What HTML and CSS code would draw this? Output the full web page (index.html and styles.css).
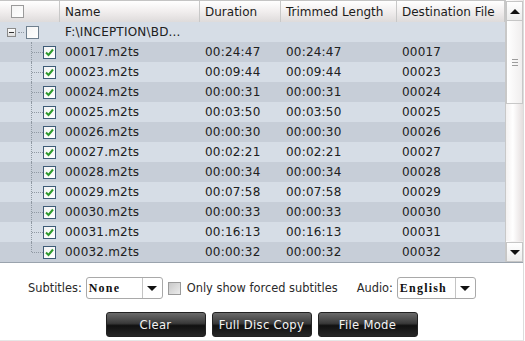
FILE: index.html
```html
<!DOCTYPE html>
<html lang="en">
<head>
  <meta charset="UTF-8">
  <title>Title List</title>
  <link rel="stylesheet" href="styles.css">
</head>
<body>
  <div class="app">
    <div class="grid">
      <div class="table">
        <div class="head">
          <div class="cell c-check"><span class="box head-box"></span></div>
          <div class="cell c-name">Name</div>
          <div class="cell c-dur">Duration</div>
          <div class="cell c-trim">Trimmed Length</div>
          <div class="cell c-dest">Destination File</div>
        </div>

        <div class="row light parent">
          <div class="cell c-check">
            <span class="minus"></span>
            <span class="dots-h short"></span>
            <span class="box"></span>
          </div>
          <div class="cell c-name">F:\INCEPTION\BD...</div>
          <div class="cell c-dur"></div>
          <div class="cell c-trim"></div>
          <div class="cell c-dest"></div>
        </div>

        <div id="rows"></div>
      </div>

      <div class="scrollbar">
        <div class="sb-btn"><span class="tri up"></span></div>
        <div class="sb-thumb"><span class="grip"></span></div>
        <div class="sb-track"></div>
        <div class="sb-btn"><span class="tri down"></span></div>
      </div>
    </div>

    <div class="options">
      <span class="label">Subtitles:</span>
      <div class="select sel-sub"><span class="sel-text">None</span><span class="sel-arrow"><span class="tri down"></span></span></div>
      <span class="box grey"></span>
      <span class="label forced">Only show forced subtitles</span>
      <span class="label audio">Audio:</span>
      <div class="select sel-audio"><span class="sel-text">English</span><span class="sel-arrow"><span class="tri down"></span></span></div>
    </div>

    <div class="buttons">
      <button>Clear</button>
      <button>Full Disc Copy</button>
      <button>File Mode</button>
    </div>
  </div>

  <script>
    // file list: name, duration, trimmed length, destination
    const files = [
      ["00017.m2ts", "00:24:47", "00:24:47", "00017"],
      ["00023.m2ts", "00:09:44", "00:09:44", "00023"],
      ["00024.m2ts", "00:00:31", "00:00:31", "00024"],
      ["00025.m2ts", "00:03:50", "00:03:50", "00025"],
      ["00026.m2ts", "00:00:30", "00:00:30", "00026"],
      ["00027.m2ts", "00:02:21", "00:02:21", "00027"],
      ["00028.m2ts", "00:00:34", "00:00:34", "00028"],
      ["00029.m2ts", "00:07:58", "00:07:58", "00029"],
      ["00030.m2ts", "00:00:33", "00:00:33", "00030"],
      ["00031.m2ts", "00:16:13", "00:16:13", "00031"],
      ["00032.m2ts", "00:00:32", "00:00:32", "00032"]
    ];

    const check = '<svg width="9" height="9" viewBox="0 0 9 9"><path d="M1 4.5 L3.5 7 L8 1.5" fill="none" stroke="#2e9a2e" stroke-width="2"/></svg>';
    const rows = document.getElementById("rows");

    files.forEach((f, i) => {
      const row = document.createElement("div");
      row.className = "row child " + (i % 2 === 0 ? "dark" : "light");
      row.innerHTML = `
        <div class="cell c-check">
          <span class="tree-v"></span>
          <span class="dots-h"></span>
          <span class="box checked">${check}</span>
        </div>
        <div class="cell c-name">${f[0]}</div>
        <div class="cell c-dur">${f[1]}</div>
        <div class="cell c-trim">${f[2]}</div>
        <div class="cell c-dest">${f[3]}</div>`;
      rows.appendChild(row);
    });
  </script>
</body>
</html>
```

FILE: styles.css
```css
body {
  margin: 0;
  font-family: "DejaVu Sans", Verdana, sans-serif;
  font-size: 12px;
  color: #1c1c1c;
  background-color: #ffffff;
}

.app {
  width: 523px;
  height: 340px;
  border-right: 1px solid #dcdcdc;
  border-bottom: 1px solid #e6e6e6;
  background-color: #ffffff;
}

.grid {
  display: flex;
  height: 262px;
  border-bottom: 1px solid #9aa3ad;
}

.table {
  width: 505px;
  overflow: hidden;
}

.head,
.row {
  display: flex;
}

.head {
  height: 21px;
  border-top: 1px solid #c4c4c4;
  background: linear-gradient(#ffffff, #f1eeee 50%, #dedbdb);
}

.head .cell {
  border-right: 1px solid #c8c8c8;
  line-height: 22px;
}

.row {
  height: 20px;
  line-height: 21px;
}

.row.light {
  background-color: #d6dde6;
}

.row.dark {
  background-color: #c7ced8;
}

.cell {
  padding-left: 5px;
  box-sizing: border-box;
  white-space: nowrap;
  overflow: hidden;
}

.row .cell {
  letter-spacing: 0.2px;
  color: #202020;
}

.c-check {
  width: 60px;
  display: flex;
  align-items: center;
  position: relative;
  padding-left: 0;
}

.c-name {
  width: 140px;
}

.c-dur {
  width: 81px;
}

.c-trim {
  width: 116px;
}

.c-dest {
  width: 108px;
}

/* checkboxes */
.box {
  display: inline-flex;
  align-items: center;
  justify-content: center;
  width: 11px;
  height: 11px;
  border: 1px solid #6f7f8e;
  background: linear-gradient(135deg, #f4f4f4, #ffffff);
  flex-shrink: 0;
}

.head-box {
  margin-left: 11px;
  border-color: #9a9a9a;
}

.box.grey {
  border-color: #9a9a9a;
  background: linear-gradient(135deg, #c8c8c8, #ececec);
}

.box.checked {
  border-color: #3c5a76;
  background-color: #ffffff;
}

/* tree lines */
.minus {
  width: 7px;
  height: 7px;
  margin-left: 7px;
  border: 1px solid #8a8a8a;
  background: linear-gradient(#ffffff, #dcdcdc);
  position: relative;
}

.minus::after {
  content: "";
  position: absolute;
  left: 1px;
  top: 3px;
  width: 5px;
  height: 1px;
  background-color: #333333;
}

.dots-h {
  width: 11px;
  height: 0;
  margin-left: 32px;
  margin-right: 0;
  border-top: 1px dotted #8f98a2;
}

.dots-h.short {
  width: 6px;
  margin-left: 2px;
  margin-right: 2px;
}

.tree-v {
  position: absolute;
  left: 31px;
  top: 0;
  height: 20px;
  border-left: 1px dotted #8f98a2;
}

.row.child:last-child .tree-v {
  height: 10px;
}

/* scrollbar */
.scrollbar {
  width: 17px;
  display: flex;
  flex-direction: column;
  border-left: 1px solid #c8c8c8;
  background: linear-gradient(90deg, #ffffff, #eeeaea);
}

.sb-btn {
  height: 18px;
  margin-top: 1px;
  display: flex;
  align-items: center;
  justify-content: center;
  border: 1px solid #c6c6c6;
  background: linear-gradient(#ffffff, #ececec);
}

.sb-thumb {
  height: 82px;
  display: flex;
  align-items: center;
  justify-content: center;
  border: 1px solid #c8c8c8;
  border-top: none;
  background: linear-gradient(90deg, #ffffff, #f0eeee);
}

.grip {
  width: 6px;
  height: 5px;
  border-top: 1px solid #9c9c9c;
  border-bottom: 1px solid #9c9c9c;
  position: relative;
}

.grip::after {
  content: "";
  position: absolute;
  left: 0;
  top: 2px;
  width: 6px;
  height: 1px;
  background-color: #9c9c9c;
}

.sb-track {
  flex: 1;
  background: linear-gradient(90deg, #f3f1f1, #ffffff 40%, #e4dede);
}

.tri {
  width: 0;
  height: 0;
  border-left: 5px solid transparent;
  border-right: 5px solid transparent;
}

.tri.up {
  border-bottom: 5px solid #111111;
}

.tri.down {
  border-top: 5px solid #111111;
}

/* options row */
.options {
  display: flex;
  align-items: center;
  height: 22px;
  margin-top: 14px;
  padding-left: 28px;
  font-size: 11.4px;
  color: #2a2a2a;
}

.label {
  margin-right: 4px;
}

.forced {
  margin-left: 6px;
  margin-right: 19px;
}

.select {
  display: flex;
  height: 20px;
  border: 1px solid #a9a9a9;
  border-radius: 3px;
  background-color: #ffffff;
  box-sizing: content-box;
}

.sel-sub {
  width: 75px;
  margin-right: 5px;
}

.sel-audio {
  width: 77px;
}

.sel-text {
  flex: 1;
  padding-left: 2px;
  line-height: 21px;
  font-family: "Liberation Serif", "Times New Roman", serif;
  font-size: 12px;
  font-weight: bold;
  letter-spacing: 1.2px;
  color: #111111;
}

.sel-arrow {
  width: 19px;
  display: flex;
  align-items: center;
  justify-content: center;
  border-left: 1px solid #c4c4c4;
}

/* buttons */
.buttons {
  display: flex;
  justify-content: center;
  gap: 6px;
  margin-top: 13px;
}

button {
  width: 100px;
  height: 25px;
  padding: 0;
  border: 1px solid #222222;
  border-radius: 3px;
  background: linear-gradient(#6a6a6a, #3a3a3a 45%, #111111 55%, #262626);
  color: #f4f4f4;
  font-family: "DejaVu Sans", Verdana, sans-serif;
  font-size: 11.6px;
  letter-spacing: 0.3px;
}
```
